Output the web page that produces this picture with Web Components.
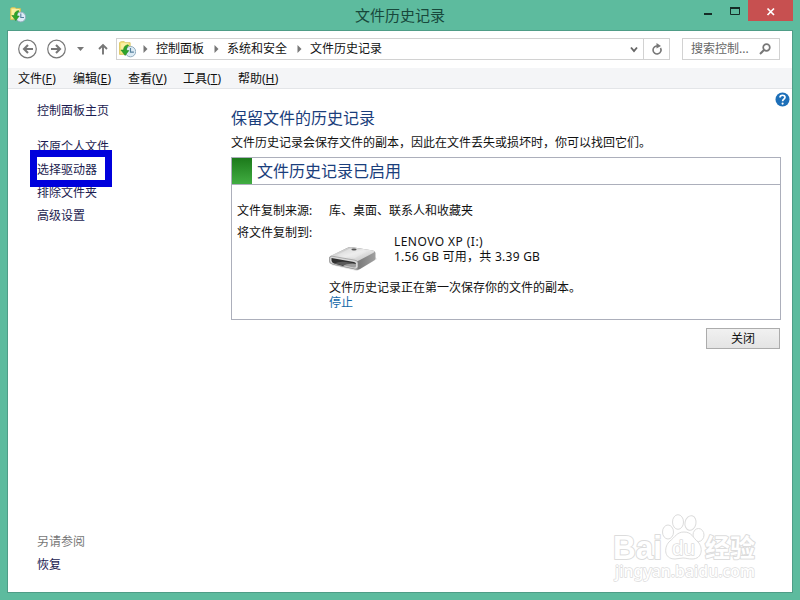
<!DOCTYPE html>
<html lang="zh-CN">
<head>
<meta charset="utf-8">
<title>文件历史记录</title>
<style>
    html, body {
        margin: 0;
        width: 800px;
        height: 600px;
        overflow: hidden;
    }

    body {
        font: 12px/16px "Noto Sans", "Noto Sans CJK SC", sans-serif;
        color: #111;
    }
</style>
</head>
<body>
<app-window titulo="文件历史记录">
    <nav-bar slot="nav"></nav-bar>
    <menu-bar slot="menu"></menu-bar>
    <side-panel slot="side"></side-panel>
    <history-page></history-page>
</app-window>

<script>
// Small helper shared by every element: opens the shadow root and fills it
class BaseElement extends HTMLElement {
    constructor() {
        super();
        this.attachShadow({ mode: 'open' });
    }

    connectedCallback() {
        const template = document.createElement('template');
        template.innerHTML = this.getTemplate();
        this.shadowRoot.innerHTML = '';
        this.shadowRoot.appendChild(template.content.cloneNode(true));
    }
}

class HistoryIcon extends BaseElement {
    getTemplate() {
        return `
        <style>
            :host { display: block; width: 16px; height: 16px; }
            svg { display: block; width: 100%; height: 100%; }
        </style>
        <svg viewBox="0 0 16 16">
            <path d="M.5 1.500 2 .6h3l1 1h4.500v11H.5z" fill="#f5e27a" stroke="#d5bd50" stroke-width=".7"/>
            <path d="M2 2h7v9H2z" fill="#fbf0a2"/>
            <circle cx="10.800" cy="10" r="4.900" fill="#dcebf5" stroke="#8fa9bb" stroke-width=".9"/>
            <path d="M10.800 6.500V10.500H14" fill="none" stroke="#57819e" stroke-width="1.100"/>
            <path d="M8.500 3.500C5.500 4 4.300 6 4.300 8.500H1.800L5.800 13.600 9.300 9H7.100c0-2 .3-3.700 1.900-4.500z" fill="#2fa52c" stroke="#178019" stroke-width=".5"/>
        </svg>
        `;
    }
}

class AppWindow extends BaseElement {
    getTemplate() {
        return `
        <style>
            :host {
                display: grid;
                grid-template-rows: 30px 1fr;
                box-sizing: border-box;
                width: 800px;
                height: 600px;
                padding: 0 7px 7px;
                background: #5dbb9e;
                position: relative;
            }

            header {
                display: grid;
                grid-template-columns: 138px 1fr 138px;
            }

            history-icon { margin: 7px 0 0 3px; }

            h1 {
                margin: 0;
                font-size: 15px;
                font-weight: normal;
                line-height: 31px;
                text-align: center;
                color: #17483b;
            }

            .buttons {
                display: flex;
                justify-content: flex-end;
            }

            .buttons svg { display: block; }

            .client {
                display: grid;
                grid-template-rows: 37px 20px 1fr;
                border: 1px solid #4f9d87;
                background: #fff;
            }

            .body {
                display: grid;
                grid-template-columns: 223px 1fr;
            }
        </style>
        <header>
            <history-icon></history-icon>
            <h1>${this.getAttribute('titulo')}</h1>
            <div class="buttons">
                <svg width="93" height="21" viewBox="0 0 93 21">
                    <path d="M4 13h8v2H4z" fill="#152c26"/>
                    <path d="M30.500 7.500h9v7h-9z" fill="none" stroke="#152c26" stroke-width="1"/>
                    <path d="M30 7h10v2H30z" fill="#152c26"/>
                    <path d="M48 0h45v21H48z" fill="#c75050"/>
                    <path d="m67.500 8.500 6.500 6.500m0-6.500L67.500 15" stroke="#fff" stroke-width="1.700"/>
                </svg>
            </div>
        </header>
        <div class="client">
            <slot name="nav"></slot>
            <slot name="menu"></slot>
            <div class="body">
                <slot name="side"></slot>
                <slot></slot>
            </div>
        </div>
        <baidu-mark></baidu-mark>
        `;
    }
}

class NavBar extends BaseElement {
    getTemplate() {
        const arrow = '<svg width="5" height="8" viewBox="0 0 5 8"><path d="M.5 0v8l4-4z" fill="#777"/></svg>';
        return `
        <style>
            :host {
                display: flex;
                box-sizing: border-box;
                padding: 7px 12px 0 8px;
            }

            svg { display: block; flex: none; }
            .arrows { width: 100px; }

            .address, .search {
                display: flex;
                align-items: center;
                box-sizing: border-box;
                height: 22px;
                border: 1px solid #d2d2d2;
            }

            .address {
                width: 554px;
                padding-left: 2px;
            }

            history-icon { width: 17px; height: 17px; margin-right: 7px; }
            .address span { margin: 0 10px 0 8px; }
            .chevron { margin: 0 5px 0 auto; }

            .refresh {
                display: grid;
                place-items: center;
                width: 25px;
                height: 20px;
                border-left: 1px solid #d2d2d2;
            }

            .search {
                justify-content: space-between;
                width: 98px;
                margin-left: 12px;
                padding: 0 8px 0 8px;
                color: #666;
            }
        </style>
        <svg class="arrows" height="22" viewBox="0 0 100 22">
            <g fill="none" stroke="#777">
                <circle cx="11.500" cy="11" r="8.800" stroke-width="1.200"/>
                <circle cx="40.500" cy="11" r="8.800" stroke-width="1.200"/>
                <path d="M17 11H8m4-4-4 4 4 4M35 11h9m-4-4 4 4-4 4" stroke-width="2.100"/>
                <path d="M87 16.500V7m-4 4 4-4 4 4" stroke-width="1.900"/>
            </g>
            <path d="M61 9h7l-3.500 4z" fill="#777"/>
        </svg>
        <div class="address">
            <history-icon></history-icon>
            ${arrow}<span>控制面板</span>
            ${arrow}<span>系统和安全</span>
            ${arrow}<span>文件历史记录</span>
            <svg class="chevron" width="8" height="7" viewBox="0 0 8 7"><path d="m1 1.500 3 3.500 3-3.500" fill="none" stroke="#666" stroke-width="1.900"/></svg>
            <div class="refresh">
                <svg width="12" height="13" viewBox="0 0 12 13">
                    <path d="M7 3.100A4 4 0 1 0 9.500 5" fill="none" stroke="#777" stroke-width="1.600"/>
                    <path d="M5.500 0v5.500L10 3z" fill="#777"/>
                </svg>
            </div>
        </div>
        <div class="search">
            <span>搜索控制...</span>
            <svg width="12" height="12" viewBox="0 0 12 12">
                <circle cx="7.500" cy="4.500" r="3.300" fill="none" stroke="#777" stroke-width="1.700"/>
                <path d="M5.200 6.800 1 11" stroke="#777" stroke-width="2"/>
            </svg>
        </div>
        `;
    }
}

class MenuBar extends BaseElement {
    getTemplate() {
        return `
        <style>
            :host {
                display: flex;
                box-sizing: border-box;
                height: 21px;
                padding-left: 10px;
                line-height: 21px;
                background: #f4f5f7;
                border-bottom: 1px solid #e3e5e8;
            }

            span { width: 55px; white-space: nowrap; }
            span:first-child { width: 54px; }
            u { text-underline-offset: 1px; letter-spacing: .3px; }
        </style>
        <span>文件(<u>F</u>)</span>
        <span>编辑(<u>E</u>)</span>
        <span>查看(<u>V</u>)</span>
        <span>工具(<u>T</u>)</span>
        <span>帮助(<u>H</u>)</span>
        `;
    }
}

class SidePanel extends BaseElement {
    getTemplate() {
        return `
        <style>
            :host {
                display: flex;
                flex-direction: column;
                box-sizing: border-box;
                padding: 11px 0 16px 29px;
                line-height: 23px;
                color: #1b1b50;
            }

            .home { margin-bottom: 13px; }
            .current { position: relative; align-self: flex-start; }

            /* Marker frame over the current link */
            .current::after {
                content: "";
                position: absolute;
                left: -7px;
                top: -8px;
                width: 68px;
                height: 23px;
                border: 7px solid #0000dc;
            }

            .also { margin-top: auto; color: #777; }
        </style>
        <div class="home">控制面板主页</div>
        <div>还原个人文件</div>
        <div class="current">选择驱动器</div>
        <div>排除文件夹</div>
        <div>高级设置</div>
        <div class="also">另请参阅</div>
        <div>恢复</div>
        `;
    }
}

class DriveIcon extends BaseElement {
    getTemplate() {
        return `
        <style>
            :host { display: block; width: 50px; height: 30px; }
            svg { display: block; }
        </style>
        <svg width="50" height="30" viewBox="0 0 50 30">
            <defs>
                <linearGradient id="top" x1="0" y1="0" x2="1" y2="1">
                    <stop offset="0" stop-color="#a8a8a8"/>
                    <stop offset=".5" stop-color="#ececec"/>
                    <stop offset="1" stop-color="#bbb"/>
                </linearGradient>
                <linearGradient id="side" x1="0" y1="0" x2="1" y2="0">
                    <stop offset="0" stop-color="#b0b0b0"/>
                    <stop offset=".6" stop-color="#777"/>
                    <stop offset="1" stop-color="#a0a0a0"/>
                </linearGradient>
            </defs>
            <path d="M2 23 28 29 48 17 46 15z" fill="#e4e4e4"/>
            <path d="M0 15 18 6Q20 5 22 5L44 8.500Q46.500 9 46.500 11v5.500q0 1-1.500 2L31 27q-1.500 1-4 .6L3 22.500Q0 21.500 0 19.500z" fill="url(#side)"/>
            <path d="M1 14 18 6Q20 5 22 5L44 8.500q3 .8.500 2.300L30 18.500q-2 1-4 .5z" fill="url(#top)"/>
            <path d="M8 13 21 6.500 38 9.500 26 16z" fill="#eee" opacity=".5"/>
            <path d="M1 15q.5-1.200 3-.7L26 18.200q3 .5 3 3v3.300q0 3-3 2.500L4 22.200q-3.500-.7-3.500-3.500z" fill="#d8d8d8" stroke="#8b8b8b" stroke-width=".6"/>
            <path d="M2.500 16 25 20q2 .5 2 2-9-.8-13 2L5 21.500q-2.500-.8-2.500-3z" fill="#303030"/>
            <path d="M5 21.500q6-2.500 12-1.500 7 1 10 2v2q0 2-2.500 1.500z" fill="#777" opacity=".6"/>
            <ellipse cx="25" cy="7.500" rx="2.600" ry="1.100" fill="#555"/>
        </svg>
        `;
    }
}

class StatusBox extends BaseElement {
    getTemplate() {
        return `
        <style>
            :host {
                display: block;
                box-sizing: border-box;
                height: 163px;
                border: 1px solid #acafbb;
            }

            header {
                display: flex;
                height: 26px;
                border-bottom: 1px solid #acafbb;
                font-size: 16px;
                line-height: 27px;
                color: #1a3e7c;
            }

            header::before {
                content: "";
                width: 20px;
                margin-right: 5px;
                background: linear-gradient(#1c7a1b, #41ad42);
            }
        </style>
        <header><slot name="title"></slot></header>
        <slot></slot>
        `;
    }
}

class HistoryPage extends BaseElement {
    getTemplate() {
        return `
        <style>
            :host {
                display: block;
                position: relative;
                padding: 18px 11px 0 0;
            }

            h2 {
                margin: 0;
                font-size: 16px;
                font-weight: normal;
                line-height: 24px;
                color: #1a3e7c;
            }

            p { margin: 4px 0 6px; line-height: 17px; }

            .info {
                display: grid;
                grid-template-columns: 92px 1fr;
                grid-template-rows: 22px 58px 31px;
                padding: 15px 0 0 5px;
                line-height: 22px;
            }

            .drive {
                display: grid;
                grid-template-columns: 65px 1fr;
                padding-top: 12px;
                line-height: 15px;
                letter-spacing: .25px;
            }

            .drive div:first-of-type span { letter-spacing: .45px; }
            drive-icon { margin-top: 8px; }

            .state { grid-column: 2; line-height: 15px; }
            .state a { display: block; color: #1468a8; }

            .close {
                display: block;
                box-sizing: border-box;
                width: 74px;
                height: 21px;
                margin: 8px 1px 0 auto;
                padding: 0;
                border: 1px solid #acacac;
                background: linear-gradient(#f1f1f1, #e4e4e4);
                font: inherit;
                line-height: 18px;
                color: inherit;
            }

            .help { position: absolute; top: 4px; right: 2px; }
        </style>
        <h2>保留文件的历史记录</h2>
        <p>文件历史记录会保存文件的副本，因此在文件丢失或损坏时，你可以找回它们。</p>
        <status-box>
            <span slot="title">文件历史记录已启用</span>
            <div class="info">
                <span>文件复制来源:</span><span>库、桌面、联系人和收藏夹</span>
                <span>将文件复制到:</span>
                <div class="drive">
                    <drive-icon></drive-icon>
                    <div><span>LENOVO XP (I:)</span><br>1.56 GB 可用，共 3.39 GB</div>
                </div>
                <div class="state">文件历史记录正在第一次保存你的文件的副本。<a>停止</a></div>
            </div>
        </status-box>
        <button class="close">关闭</button>
        <svg class="help" width="15" height="15" viewBox="0 0 15 15">
            <circle cx="7.500" cy="7.500" r="7" fill="#1d6fb8"/>
            <path d="M5 5.600C5 2.500 10 2.600 10 5.300 10 7.200 7.600 7 7.600 9.300" fill="none" stroke="#fff" stroke-width="1.700"/>
            <circle cx="7.600" cy="11.600" r="1.100" fill="#fff"/>
        </svg>
        `;
    }
}

class BaiduMark extends BaseElement {
    getTemplate() {
        return `
        <style>
            :host { position: absolute; left: 608px; top: 510px; }
            svg { display: block; }
            text {
                font-family: "Liberation Sans", "Noto Sans CJK SC", sans-serif;
                font-weight: bold;
                paint-order: stroke;
            }
        </style>
        <svg width="152" height="76" viewBox="0 0 152 76">
            <g fill="#fff" stroke="#dcdcdc" stroke-width="2" stroke-linejoin="round">
                <text x="5" y="49" font-size="33" textLength="49" lengthAdjust="spacingAndGlyphs">Bai</text>
                <g stroke-width="1">
                    <ellipse cx="60" cy="22" rx="5.500" ry="7"/>
                    <ellipse cx="70" cy="12" rx="5.500" ry="7.300"/>
                    <ellipse cx="82.500" cy="13" rx="5.500" ry="7.300" transform="rotate(12 82.500 13)"/>
                    <ellipse cx="90.500" cy="25" rx="5.500" ry="6.500"/>
                    <path d="M76 22c8 0 9 6 14 10 5 5 5 17-6 17-4 0-6-1-9-1s-5 1-8 1c-12 0-11-13-5-18 5-4 7-9 14-9z"/>
                </g>
                <text x="64" y="45" font-size="20" textLength="23" lengthAdjust="spacingAndGlyphs" stroke-width="1.500" style="font-weight: normal">du</text>
                <text x="97" y="47" font-size="25" textLength="50">经验</text>
                <text x="7" y="67" font-size="16" textLength="140" lengthAdjust="spacingAndGlyphs" stroke-width="1.400" style="font-family: 'Noto Sans', sans-serif; font-weight: 500">jingyan.baidu.com</text>
            </g>
        </svg>
        `;
    }
}

customElements.define('history-icon', HistoryIcon);
customElements.define('drive-icon', DriveIcon);
customElements.define('baidu-mark', BaiduMark);
customElements.define('nav-bar', NavBar);
customElements.define('menu-bar', MenuBar);
customElements.define('side-panel', SidePanel);
customElements.define('status-box', StatusBox);
customElements.define('history-page', HistoryPage);
customElements.define('app-window', AppWindow);
</script>
</body>
</html>
